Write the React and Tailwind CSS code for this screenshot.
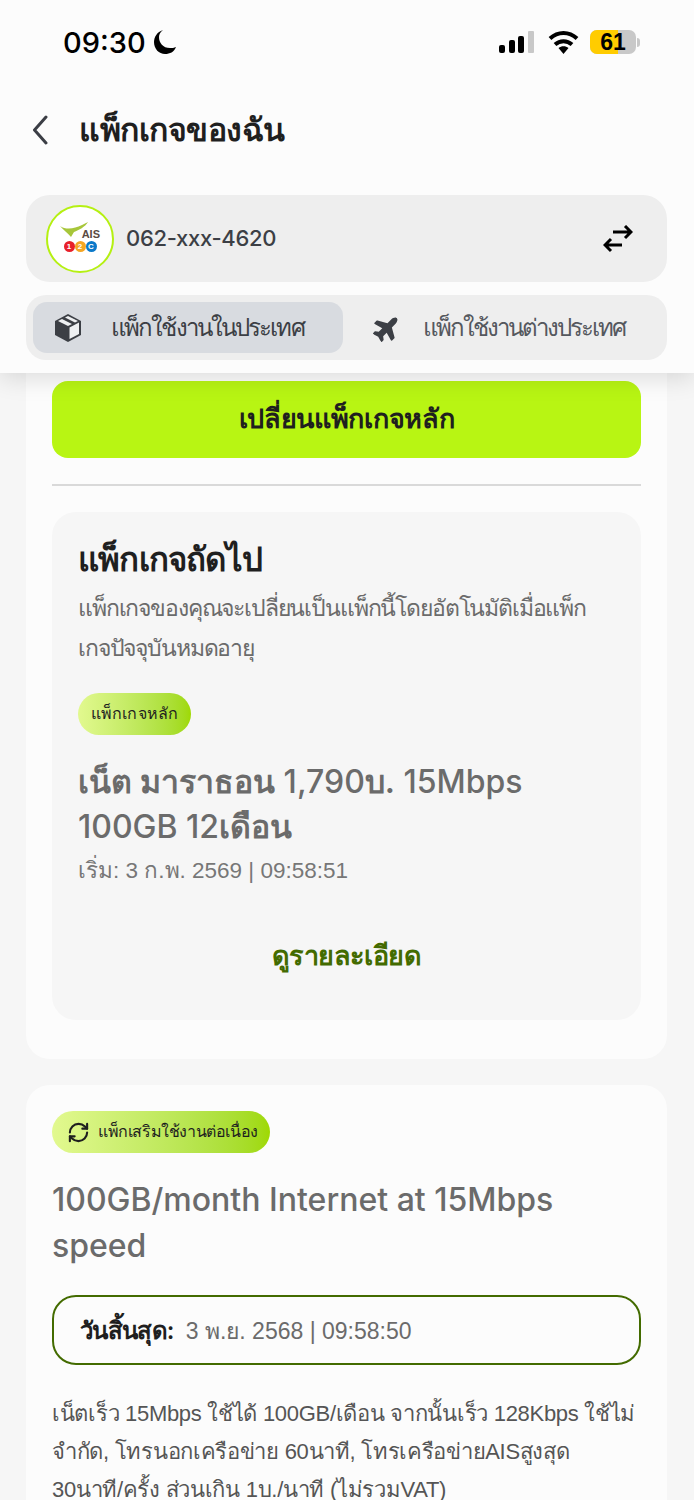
import { RefreshCw } from "lucide-react";
import { FaPlane } from "react-icons/fa";

function StatusBar() {
  return (
    <div className="h-[84px] flex items-center justify-between pl-[63px] pr-[54px]">
      <div className="flex items-center gap-[7px]">
        <span className="font-['Inter'] text-[29px] font-medium text-black leading-none">09:30</span>
        <svg width="24" height="26" viewBox="0 0 24 26">
          <path d="M10 1C4 3 1 8 1 13c0 7 5 12 11 12 5 0 9-2 11-7-2 1-4 1-6 1-7 0-11-5-11-11 0-2 1-5 4-7z" fill="#000" />
        </svg>
      </div>
      <div className="flex items-center">
        <svg width="36" height="22" viewBox="0 0 36 22" className="mr-[13px]">
          <rect x="0" y="14" width="6" height="8" rx="2" fill="#000" />
          <rect x="10" y="9" width="6" height="13" rx="2" fill="#000" />
          <rect x="19" y="5" width="6" height="17" rx="2" fill="#000" />
          <rect x="29" y="0" width="6" height="22" rx="1" fill="#c8c8c8" />
        </svg>
        <svg width="31" height="24" viewBox="0 0 31 24" className="mr-[11px]">
          <path d="M15.500 24l-5-6c3-2.200 7-2.200 10 0z" fill="#000" />
          <path d="M7 14.500C12 10 19 10 24 14.500" stroke="#000" strokeWidth="4" fill="none" />
          <path d="M2 8.500C10 1 21 1 29 8.500" stroke="#000" strokeWidth="4" fill="none" />
        </svg>
        <div className="relative w-[46px] h-[24px] rounded-[7px] bg-[#c8c8c8] overflow-hidden flex">
          <div className="w-[28px] h-full bg-[#ffcc00]" />
          <span className="absolute inset-0 text-center text-[23px] leading-[24px] font-bold text-black">61</span>
        </div>
        <div className="w-[3px] h-[9px] bg-[#c8c8c8] ml-[1px] rounded-r-full" />
      </div>
    </div>
  );
}

function AisLogo() {
  return (
    <div className="w-[68px] h-[68px] rounded-full bg-white border-2 border-[#b5f012] flex flex-col items-center justify-center shrink-0">
      <div className="relative w-[36px] h-[14px]">
        <svg width="30" height="16" viewBox="0 0 30 16" className="absolute left-[-2px] top-[-3px]">
          <path d="M0 4c6 4 14 3 22-1l6-3c-3 5-9 8-14 10l-3 5C8 11 3 8 0 4z" fill="#a7c63a" />
        </svg>
        <span className="absolute right-[-2px] top-[3px] text-[11px] leading-[13px] font-bold text-[#5a4a42]">AIS</span>
      </div>
      <div className="flex mt-[2px]">
        <span className="w-[11px] h-[11px] rounded-full bg-[#e8202a] text-white text-[8px] leading-[11px] text-center font-bold">1</span>
        <span className="w-[11px] h-[11px] rounded-full bg-[#f5a623] text-white text-[8px] leading-[11px] text-center font-bold">2</span>
        <span className="w-[11px] h-[11px] rounded-full bg-[#0b79c9] text-white text-[8px] leading-[11px] text-center font-bold">C</span>
      </div>
    </div>
  );
}

function Header() {
  return (
    <div className="bg-[#fcfcfc] shadow-[0_4px_24px_rgba(0,0,0,0.14)] pb-[13px] relative">
      <StatusBar />
      <div className="h-[94px] flex items-center pl-[32px] gap-[31px] pb-[3px]">
        <svg width="16" height="30" viewBox="0 0 16 30">
          <path d="M14 2L2.500 15 14 28" stroke="#3b3e45" strokeWidth="3" fill="none" strokeLinecap="round" strokeLinejoin="round" />
        </svg>
        <h1 className="font-['Inter'] text-[32px] font-semibold tracking-[-0.5px] text-[#1f1f1f] leading-none whitespace-nowrap">แพ็กเกจของฉัน</h1>
      </div>
      <div className="ml-[26px] mr-[27px] mt-[17px] h-[87px] rounded-[24px] bg-[#eeeeee] flex items-center pl-[20px] pr-[34px]">
        <AisLogo />
        <span className="ml-[12px] font-['Inter'] text-[22px] font-medium tracking-[-0.3px] text-[#3c3f45]">062-xxx-4620</span>
        <svg width="30" height="28" viewBox="0 0 30 28" className="ml-auto">
          <path d="M10 7h18M22 1l6 6-6 6M19 20H2M8 14l-6 6 6 6" stroke="#000" strokeWidth="3" fill="none" />
        </svg>
      </div>
      <div className="ml-[26px] mr-[27px] mt-[13px] h-[65px] rounded-[20px] bg-[#eeeeee] pl-[7px] py-[7px] flex">
        <div className="w-[310px] rounded-[14px] bg-[#d8dbe0] flex items-center pl-[21px]">
          <svg width="28" height="30" viewBox="0 0 28 30">
            <path d="M14 1L27 8v14l-13 7-13-7V8z" fill="#3c3f45" />
            <path d="M15.500 14.500L25 9.500v11.500l-9.500 5z" fill="#eef0f2" />
            <path d="M4 8l4-2 10 5-4 2zM11 4.500l3-1.500 10 5-3 1.500z" fill="#eef0f2" />
          </svg>
          <span className="ml-[29px] text-[24px] tracking-[-1.9px] text-[#3c3f45] whitespace-nowrap">แพ็กใช้งานในประเทศ</span>
        </div>
        <div className="flex-1 flex items-center pl-[30px]">
          <FaPlane size={28} className="text-[#3c3f45] -rotate-45" />
          <span className="ml-[22px] text-[24px] tracking-[-2px] text-[#55585e] whitespace-nowrap">แพ็กใช้งานต่างประเทศ</span>
        </div>
      </div>
    </div>
  );
}

function NextPackage() {
  return (
    <div className="mt-[26px] rounded-[24px] bg-[#f6f6f6] h-[508px] px-[26px] pt-[25px]">
      <h2 className="font-['Inter'] text-[33px] font-semibold tracking-[-0.8px] text-[#1f1f1f] leading-[44px] whitespace-nowrap">แพ็กเกจถัดไป</h2>
      <p className="mt-[7px] text-[23px] tracking-[-1.15px] leading-[40px] text-[#6b6b6b] whitespace-nowrap">
        แพ็กเกจของคุณจะเปลี่ยนเป็นแพ็กนี้โดยอัตโนมัติเมื่อแพ็ก
        <br />
        เกจปัจจุบันหมดอายุ
      </p>
      <div className="mt-[25px] w-[113px] h-[42px] rounded-full bg-gradient-to-r from-[#e2f98f] to-[#9fd900] flex items-center justify-center text-[16px] tracking-[0.1px] text-[#1f1f1f] whitespace-nowrap">
        แพ็กเกจหลัก
      </div>
      <h3 className="mt-[24px] font-['Inter'] text-[32px] font-medium leading-[45px] text-[#6b6b6b] whitespace-nowrap">
        <span className="font-semibold">เน็ต มาราธอน</span> 1,790<span className="font-semibold">บ.</span> 15Mbps
        <br />
        100GB 12<span className="font-semibold">เดือน</span>
      </h3>
      <p className="mt-[3px] text-[22.500px] leading-[38px] text-[#777777] whitespace-nowrap">เริ่ม: 3 ก.พ. 2569 | 09:58:51</p>
      <div className="mt-[44px] text-center text-[27px] font-semibold tracking-[-0.6px] text-[#436b00] leading-[44px]">ดูรายละเอียด</div>
    </div>
  );
}

function AddonCard() {
  return (
    <div className="ml-[26px] mr-[27px] mt-[26px] rounded-t-[24px] bg-[#fcfcfc] px-[26px] pt-[26px] pb-[20px]">
      <div className="w-[218px] h-[42px] rounded-full bg-gradient-to-r from-[#e2f98f] to-[#9fd900] flex items-center pl-[15px] gap-[8px] text-[16px] tracking-[-0.4px] text-[#1f1f1f] whitespace-nowrap">
        <RefreshCw size={23} strokeWidth={2.2} className="text-[#1f1f1f]" />
        แพ็กเสริมใช้งานต่อเนื่อง
      </div>
      <h3 className="mt-[24px] font-['Inter'] text-[32px] font-medium leading-[46px] text-[#6b6b6b] whitespace-nowrap">
        100GB/month Internet at 15Mbps
        <br />
        speed
      </h3>
      <div className="mt-[26px] h-[70px] rounded-[24px] border-2 border-[#436b00] flex items-center pl-[26px] pt-[2px]">
        <span className="font-['Inter'] text-[24px] font-semibold tracking-[-0.7px] text-[#1f1f1f] whitespace-nowrap">วันสิ้นสุด:</span>
        <span className="ml-[12px] text-[23px] text-[#6b6b6b] whitespace-nowrap">3 พ.ย. 2568 | 09:58:50</span>
      </div>
      <p className="mt-[30px] text-[22px] tracking-[-0.3px] leading-[38px] text-[#555555] whitespace-nowrap">
        เน็ตเร็ว 15Mbps ใช้ได้ 100GB/เดือน จากนั้นเร็ว 128Kbps ใช้ไม่
        <br />
        จำกัด, โทรนอกเครือข่าย 60นาที, โทรเครือข่ายAISสูงสุด
        <br />
        30นาที/ครั้ง ส่วนเกิน 1บ./นาที (ไม่รวมVAT)
      </p>
    </div>
  );
}

export default function App() {
  return (
    <div className="w-[694px] h-[1500px] overflow-hidden bg-[#f6f6f6] font-['Liberation_Sans','Noto_Sans',sans-serif]">
      <Header />
      <div className="ml-[26px] mr-[27px] rounded-b-[24px] bg-[#fcfcfc] px-[26px] pt-[8px] pb-[39px]">
        <button className="w-full h-[77px] rounded-[16px] bg-[#b8f513] text-[27px] font-semibold tracking-[-0.3px] text-[#1f1f1f] whitespace-nowrap">
          เปลี่ยนแพ็กเกจหลัก
        </button>
        <div className="mt-[26px] h-[2px] bg-[#d9d9d9]" />
        <NextPackage />
      </div>
      <AddonCard />
    </div>
  );
}
